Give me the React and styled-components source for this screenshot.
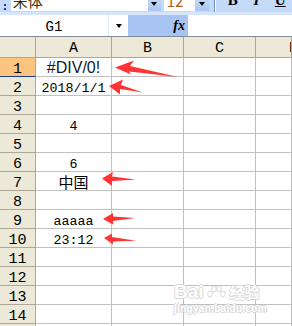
import React from 'react'
import styled, { createGlobalStyle } from 'styled-components'

const GlobalStyle = createGlobalStyle`
  html, body {
    margin: 0;
    padding: 0;
    background: #fff;
    overflow: hidden;
  }
  body {
    font-family: "Liberation Sans", Arial, sans-serif;
  }
`

const Window = styled.div`
  position: relative;
  width: 292px;
  height: 326px;
  overflow: hidden;
  background: #fff;
`

// 工具栏（上半部分被截掉）
const Toolbar = styled.div`
  height: 12px;
  display: flex;
  align-items: flex-end;
  overflow: hidden;
  background: #c4daf8;
  border-bottom: 3px solid #d6e5fa;
`

const Gripper = styled.div`
  width: 11px;
  height: 12px;
  display: flex;
  flex-direction: column;
  align-items: center;
  justify-content: flex-end;
  gap: 2px;
  padding-bottom: 2px;
  box-sizing: border-box;
  span {
    width: 2px;
    height: 2px;
    background: #27418f;
  }
`

const Combo = styled.div`
  width: ${p => p.$w}px;
  height: 20px;
  margin-bottom: 1px;
  background: #fff;
  box-sizing: border-box;
  padding-left: ${p => p.$pl || 2}px;
  font-family: "Noto Sans CJK SC", "Liberation Sans", sans-serif;
  font-size: 15px;
  line-height: 20px;
  color: ${p => p.$color || '#3a2a10'};
  white-space: nowrap;
`

const DropBtn = styled.div`
  width: ${p => p.$w || 13}px;
  height: 20px;
  margin-bottom: 1px;
  margin-right: ${p => p.$mr || 0}px;
  background: linear-gradient(#d3e4fb, #a9c7f4);
  display: flex;
  align-items: flex-end;
  justify-content: center;
  padding-bottom: 5px;
  box-sizing: border-box;
`

const Tri = styled.span`
  width: 0;
  height: 0;
  border-left: 3.5px solid transparent;
  border-right: 3.5px solid transparent;
  border-top: 4px solid #000;
`

const Sep = styled.div`
  width: 1px;
  height: 12px;
  margin: 0 6px 0 5px;
  background: #6a8ccb;
  box-shadow: 1px 0 0 #fff;
`

const FmtBtn = styled.div`
  width: ${p => p.$w || 24}px;
  height: 20px;
  margin-bottom: 1px;
  text-align: center;
  font-family: "Liberation Serif", "Times New Roman", serif;
  font-size: 15px;
  font-weight: bold;
  font-style: ${p => (p.$italic ? 'italic' : 'normal')};
  text-decoration: ${p => (p.$under ? 'underline' : 'none')};
  line-height: 18px;
  color: #000;
`

// 名称框与编辑栏
const FormulaBar = styled.div`
  height: 21px;
  display: flex;
  background: #a7c4f3;
  border-bottom: 1px solid #7f8a99;
`

const NameBox = styled.div`
  width: 108px;
  background: #fff;
  text-align: center;
  font-family: "Liberation Mono", monospace;
  font-size: 14px;
  line-height: 21px;
  padding-top: 2px;
  box-sizing: border-box;
  color: #000;
`

const NameDrop = styled.div`
  width: 20px;
  background: #fff;
  display: flex;
  align-items: center;
  justify-content: center;
  border-left: 1px solid #e4ecf9;
  box-sizing: border-box;
`

const FxArea = styled.div`
  width: 60px;
  display: flex;
  align-items: center;
  justify-content: flex-end;
  padding-right: 3px;
  box-sizing: border-box;
  font-family: "Liberation Serif", "Times New Roman", serif;
  font-style: italic;
  font-weight: bold;
  font-size: 14px;
  color: #000;
`

const FormulaInput = styled.div`
  flex: 1;
  background: #fff;
`

// 表格
const Sheet = styled.div`
  display: flex;
  flex-direction: column;
`

const Row = styled.div`
  display: grid;
  grid-template-columns: 36px 76px 72px 72px 1fr;
  height: ${p => (p.$head ? 21 : 19)}px;
  flex-shrink: 0;
`

const HeadCell = styled.div`
  background: ${p => (p.$active ? '#fcc47f' : '#ece9d8')};
  border-right: 1px solid #aca899;
  border-bottom: 1px solid ${p => (p.$active ? '#1c3a8a' : '#aca899')};
  box-sizing: border-box;
  text-align: ${p => (p.$edge ? 'left' : 'center')};
  padding-left: ${p => (p.$edge ? 33 : 0)}px;
  font-family: "Liberation Mono", monospace;
  font-size: 15px;
  line-height: 17px;
  padding-top: 3px;
  color: #000;
  overflow: hidden;
  white-space: nowrap;
`

const fontFor = {
  sans: '"Liberation Sans", Arial, sans-serif',
  cjk: '"Noto Sans CJK SC", sans-serif',
  mono: '"Liberation Mono", monospace',
}

const Cell = styled.div`
  border-right: 1px solid #c0c0c0;
  border-bottom: 1px solid #c0c0c0;
  box-sizing: border-box;
  text-align: center;
  overflow: hidden;
  white-space: nowrap;
  font-family: ${p => fontFor[p.$kind || 'mono']};
  font-size: ${p => (p.$kind === 'sans' ? 16 : p.$kind === 'cjk' ? 15 : 13.3)}px;
  line-height: ${p => (p.$kind === 'cjk' ? 17 : 18)}px;
  padding-top: ${p => (p.$kind === 'sans' ? 1 : p.$kind === 'cjk' ? 1 : 3)}px;
  color: ${p => (p.$kind === 'sans' ? '#0d1a33' : '#000')};
`

// 红色箭头（覆盖在表格上）
const Overlay = styled.svg`
  position: absolute;
  left: 0;
  top: 0;
  pointer-events: none;
`

// 百度经验水印
const Watermark = styled.div`
  position: absolute;
  left: 174px;
  top: 271px;
  display: flex;
  flex-direction: column;
  align-items: flex-start;
  color: #fff;
  text-shadow: 1px 0 0 #d8d8d8, -1px 0 0 #d8d8d8, 0 1px 0 #d8d8d8, 0 -1px 0 #d8d8d8;
  pointer-events: none;
`

const MarkLine = styled.div`
  display: flex;
  align-items: flex-end;
  height: 30px;
  font-family: "Liberation Sans", Arial, sans-serif;
  font-weight: bold;
  font-size: 19px;
  line-height: 19px;
`

const MarkCjk = styled.span`
  font-family: "Noto Sans CJK SC", sans-serif;
  font-weight: bold;
  font-size: 15px;
  line-height: 19px;
  margin-left: 2px;
`

const MarkUrl = styled.div`
  margin-top: 3px;
  font-family: "Liberation Sans", Arial, sans-serif;
  font-weight: bold;
  font-size: 10px;
  line-height: 10px;
  letter-spacing: 0.3px;
`

const rows = [
  { n: 1, text: '#DIV/0!', kind: 'sans', active: true },
  { n: 2, text: '2018/1/1' },
  { n: 3 },
  { n: 4, text: '4' },
  { n: 5 },
  { n: 6, text: '6' },
  { n: 7, text: '中国', kind: 'cjk' },
  { n: 8 },
  { n: 9, text: 'aaaaa' },
  { n: 10, text: '23:12' },
  { n: 11 },
  { n: 12 },
  { n: 13 },
  { n: 14 },
  { n: 15 },
]

const arrows = [
  '115,67.5 134,60.5 130,66 178,77 129,71.5 131,74.5',
  '109,86 123,79.5 121,85 143,92.5 120,89 120,94.5',
  '102,178.5 113,172 112,176.5 136,179.5 112,181 112,186',
  '103,219 113,213 113,216.5 135,218 113,221 113,224.5',
  '104,238 112,233.5 112,237 136,240.8 113,241.5 113,244.5',
]

const Paw = () => (
  <svg width="24" height="16" viewBox="0 0 24 16">
    <g fill="#fff" stroke="#d8d8d8" strokeWidth="1">
      <ellipse cx="6" cy="9" rx="2.3" ry="3" />
      <ellipse cx="10" cy="4" rx="2.3" ry="3" />
      <ellipse cx="15" cy="4" rx="2.3" ry="3" />
      <ellipse cx="19" cy="9" rx="2.3" ry="3" />
    </g>
  </svg>
)

export default function App() {
  return (
    <Window>
      <GlobalStyle />
      <Toolbar>
        <Gripper>
          <span />
          <span />
        </Gripper>
        <Combo $w={139}>宋体</Combo>
        <DropBtn $mr={3}>
          <Tri />
        </DropBtn>
        <Combo $w={32} $color="#b05a10" $pl={3}>12</Combo>
        <DropBtn $w={14}>
          <Tri />
        </DropBtn>
        <Sep />
        <FmtBtn>B</FmtBtn>
        <FmtBtn $italic>I</FmtBtn>
        <FmtBtn $under>U</FmtBtn>
      </Toolbar>

      <FormulaBar>
        <NameBox>G1</NameBox>
        <NameDrop>
          <Tri />
        </NameDrop>
        <FxArea>fx</FxArea>
        <FormulaInput />
      </FormulaBar>

      <Sheet>
        <Row $head>
          <HeadCell />
          <HeadCell>A</HeadCell>
          <HeadCell>B</HeadCell>
          <HeadCell>C</HeadCell>
          <HeadCell $edge>D</HeadCell>
        </Row>
        {rows.map(r => (
          <Row key={r.n}>
            <HeadCell $active={r.active}>{r.n}</HeadCell>
            <Cell $kind={r.kind}>{r.text}</Cell>
            <Cell />
            <Cell />
            <Cell />
          </Row>
        ))}
      </Sheet>

      <Overlay width="292" height="326">
        {arrows.map((pts, i) => (
          <polygon key={i} points={pts} fill="#ff3535" />
        ))}
      </Overlay>

      <Watermark>
        <MarkLine>
          Bai
          <Paw />
          <MarkCjk>经验</MarkCjk>
        </MarkLine>
        <MarkUrl>jingyan.baidu.com</MarkUrl>
      </Watermark>
    </Window>
  )
}
